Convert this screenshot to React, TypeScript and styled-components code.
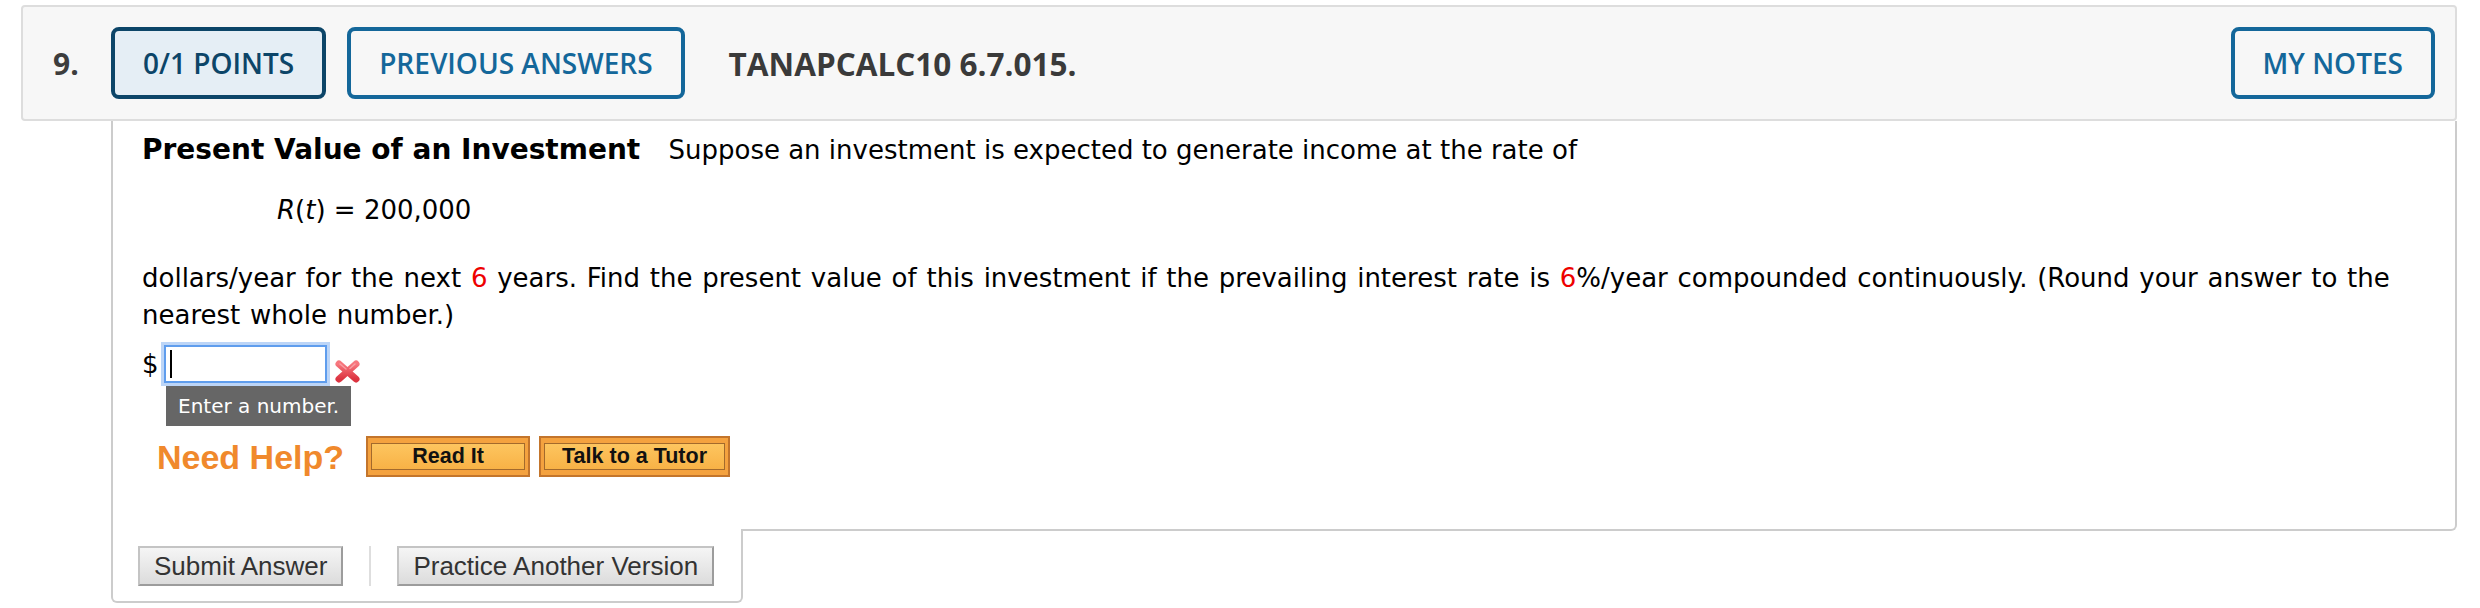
import React from 'react';
import styled, { createGlobalStyle } from 'styled-components';

const GlobalStyle = createGlobalStyle`
  html, body {
    margin: 0;
    padding: 0;
    background: #ffffff;
  }
  body {
    font-family: 'DejaVu Sans', Verdana, sans-serif;
    color: #000000;
  }
`;

const Page = styled.div`
  padding: 5px 23px 0 21px;
`;

const QuestionHeader = styled.header`
  display: flex;
  align-items: center;
  gap: 21px;
  height: 112px;
  padding-right: 20px;
  background: #f7f7f7;
  border: 2px solid #dddddd;
  border-radius: 4px;
  font-family: 'Open Sans', sans-serif;
`;

const QuestionNumber = styled.span`
  width: 67px;
  box-sizing: border-box;
  padding-left: 30px;
  font-size: 30px;
  font-weight: 700;
  color: #3d3d3d;
`;

const HeaderButton = styled.button<{ $filled?: boolean }>`
  height: 72px;
  padding: 0 28px;
  border: 4px solid ${(p) => (p.$filled ? '#0c4568' : '#14679a')};
  border-radius: 8px;
  background: ${(p) => (p.$filled ? '#e5eef5' : 'transparent')};
  color: ${(p) => (p.$filled ? '#0c4568' : '#14679a')};
  font-family: 'Open Sans', sans-serif;
  font-size: 28px;
  font-weight: 600;
  white-space: nowrap;
  cursor: pointer;
`;

const NotesButton = styled(HeaderButton)`
  margin-left: auto;
`;

const AssignmentCode = styled.span`
  margin-left: 23px;
  font-size: 31.5px;
  font-weight: 700;
  color: #3a3a3a;
`;

const QuestionBody = styled.div`
  margin-left: 90px;
  padding: 10px 40px 52px 29px;
  border: 2px solid #cccccc;
  border-top: none;
  border-bottom-right-radius: 6px;
  font-size: 26px;
  line-height: 37px;
`;

const Paragraph = styled.p<{ $wide?: boolean }>`
  margin: 0;
  word-spacing: ${(p) => (p.$wide ? '1.5px' : '0')};
`;

const Title = styled.b`
  font-size: 28px;
  margin-right: 20px;
`;

const Formula = styled.div`
  margin: 23px 0 31px 135px;
`;

const Given = styled.span`
  color: #ee0000;
`;

const AnswerRow = styled.div`
  display: flex;
  align-items: center;
  height: 44px;
  margin-top: 8px;
`;

const AnswerField = styled.div`
  display: flex;
  align-items: center;
  box-sizing: border-box;
  width: 163px;
  height: 38px;
  margin-left: 5px;
  padding-left: 4px;
  background: #ffffff;
  border: 2px solid #5f9ded;
  box-shadow: 0 0 0 3px #bcd5f7;
`;

const Caret = styled.span`
  width: 2px;
  height: 28px;
  background: #000000;
`;

const WrongMark = styled.svg`
  margin: 14px 0 0 7px;
`;

const Hint = styled.div`
  width: fit-content;
  height: 40px;
  margin-left: 24px;
  padding: 0 12px;
  background: #666666;
  color: #ffffff;
  font-size: 20px;
  line-height: 40px;
`;

const HelpRow = styled.div`
  display: flex;
  align-items: center;
  height: 41px;
  margin: 10px 0 0 15px;
`;

const HelpLabel = styled.span`
  margin-right: 22px;
  font-family: 'Liberation Sans', Arial, sans-serif;
  font-size: 34px;
  font-weight: 700;
  color: #f0892c;
  line-height: 1;
`;

const HelpButton = styled.button<{ $width: number }>`
  width: ${(p) => p.$width}px;
  height: 41px;
  margin-right: 9px;
  padding: 5px 3px;
  box-sizing: border-box;
  background: #f4a23f;
  border: 2px solid #c3752c;
  cursor: pointer;
`;

const HelpButtonFace = styled.span`
  display: flex;
  align-items: center;
  justify-content: center;
  height: 100%;
  box-sizing: border-box;
  border: 1px solid #a36a2c;
  background: linear-gradient(#fdc55f, #f8b246);
  font-family: 'Liberation Sans', Arial, sans-serif;
  font-size: 21.5px;
  font-weight: 700;
  color: #111111;
`;

const ActionTab = styled.div`
  display: flex;
  align-items: center;
  gap: 26px;
  box-sizing: border-box;
  width: 632px;
  margin: -2px 0 0 90px;
  padding: 17px 0 15px 25px;
  background: #ffffff;
  border: 2px solid #cccccc;
  border-top: none;
  border-radius: 0 0 6px 6px;
`;

const GrayButton = styled.button`
  height: 40px;
  padding: 0 14px;
  background: linear-gradient(#f5f5f5, #dcdcdc);
  border: 2px solid;
  border-color: #c4c4c4 #9c9c9c #9c9c9c #c4c4c4;
  border-radius: 0;
  font-family: 'Liberation Sans', Arial, sans-serif;
  font-size: 26px;
  color: #333333;
  cursor: pointer;
`;

const Divider = styled.span`
  width: 2px;
  height: 40px;
  background: #dedede;
`;

const RedCross = () => (
  <WrongMark width="27" height="25" viewBox="0 0 27 25">
    <defs>
      <linearGradient id="crossFill" x1="0" y1="0" x2="0" y2="1">
        <stop offset="0" stopColor="#f7777e" />
        <stop offset="1" stopColor="#dc3340" />
      </linearGradient>
    </defs>
    <g stroke="url(#crossFill)" strokeWidth="7" strokeLinecap="round">
      <line x1="5" y1="5" x2="22" y2="20" />
      <line x1="22" y1="5" x2="5" y2="20" />
    </g>
    <g stroke="#fbb3b7" strokeWidth="1.5" strokeLinecap="round" opacity="0.7">
      <line x1="6" y1="5" x2="12" y2="10" />
      <line x1="21" y1="5" x2="16" y2="9.5" />
    </g>
  </WrongMark>
);

const App = () => {
  return (
    <Page>
      <GlobalStyle />
      <QuestionHeader>
        <QuestionNumber>9.</QuestionNumber>
        <HeaderButton $filled>0/1 POINTS</HeaderButton>
        <HeaderButton>PREVIOUS ANSWERS</HeaderButton>
        <AssignmentCode>TANAPCALC10 6.7.015.</AssignmentCode>
        <NotesButton>MY NOTES</NotesButton>
      </QuestionHeader>
      <QuestionBody>
        <Paragraph>
          <Title>Present Value of an Investment</Title> Suppose an investment is
          expected to generate income at the rate of
        </Paragraph>
        <Formula>
          <i>R</i>(<i>t</i>) = 200,000
        </Formula>
        <Paragraph $wide>
          dollars/year for the next <Given>6</Given> years. Find the present
          value of this investment if the prevailing interest rate is{' '}
          <Given>6</Given>%/year compounded continuously. (Round your answer to
          the nearest whole number.)
        </Paragraph>
        <AnswerRow>
          <span>$</span>
          <AnswerField>
            <Caret />
          </AnswerField>
          <RedCross />
        </AnswerRow>
        <Hint>Enter a number.</Hint>
        <HelpRow>
          <HelpLabel>Need Help?</HelpLabel>
          <HelpButton $width={164}>
            <HelpButtonFace>Read It</HelpButtonFace>
          </HelpButton>
          <HelpButton $width={191}>
            <HelpButtonFace>Talk to a Tutor</HelpButtonFace>
          </HelpButton>
        </HelpRow>
      </QuestionBody>
      <ActionTab>
        <GrayButton>Submit Answer</GrayButton>
        <Divider />
        <GrayButton>Practice Another Version</GrayButton>
      </ActionTab>
    </Page>
  );
};

export default App;
